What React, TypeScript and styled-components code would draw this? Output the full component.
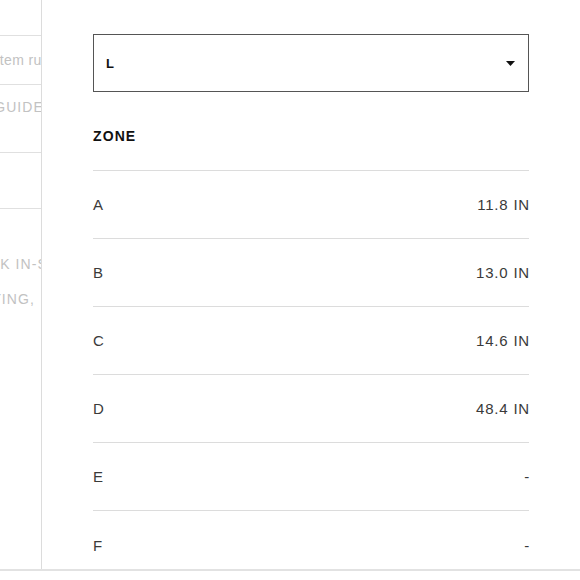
import React from 'react';
import styled, { createGlobalStyle } from 'styled-components';

const GlobalStyle = createGlobalStyle`
  html, body {
    margin: 0;
    padding: 0;
    background: #fff;
  }
  body {
    font-family: "Liberation Sans", Arial, sans-serif;
  }
`;

const Screen = styled.div`
  width: 580px;
  height: 580px;
  display: flex;
  flex-direction: column;
  overflow: hidden;
  background: #fff;
`;

const Main = styled.div`
  height: 571px;
  flex: 0 0 571px;
  min-height: 0;
  overflow: hidden;
  display: flex;
  border-bottom: 2px solid #e2e2e2;
  box-sizing: border-box;
`;

const BackPage = styled.div`
  flex: 0 0 41px;
  overflow: hidden;
  border-right: 1px solid #dcdcdc;
  display: flex;
  flex-direction: column;
`;

const BackRow = styled.div<{ $h: number; $top?: number }>`
  height: ${(p) => p.$h}px;
  flex: 0 0 ${(p) => p.$h}px;
  border-bottom: 1px solid #e0e0e0;
  display: flex;
  justify-content: flex-end;
  align-items: ${(p) => (p.$top ? 'flex-start' : 'center')};
  padding-top: ${(p) => p.$top || 0}px;
  box-sizing: border-box;
`;

const BackText = styled.span<{ $caps?: boolean; $clip?: number }>`
  white-space: nowrap;
  font-size: 14px;
  color: #c2c2c2;
  letter-spacing: ${(p) => (p.$caps ? '1.1px' : '0.4px')};
  margin-right: ${(p) => -(p.$clip ?? 0)}px;
`;

const BackCopy = styled.div`
  padding-top: 38px;
  display: flex;
  flex-direction: column;
  align-items: flex-end;
  line-height: 35px;
`;

const Drawer = styled.div`
  flex: 1;
  min-height: 0;
  padding: 34px 51px 0 51px;
  display: flex;
  flex-direction: column;
  box-sizing: border-box;
`;

const Select = styled.div`
  height: 58px;
  flex: 0 0 58px;
  border: 1px solid #555;
  box-sizing: border-box;
  display: flex;
  align-items: center;
  justify-content: space-between;
  padding: 0 13px 0 12px;
  font-size: 13px;
  font-weight: 700;
  color: #111;
`;

const Caret = styled.svg`
  width: 9px;
  height: 5px;
  display: block;
`;

const ZoneHead = styled.div`
  flex: 0 0 79px;
  height: 79px;
  box-sizing: border-box;
  padding-top: 36px;
  line-height: 16px;
  border-bottom: 1px solid #dcdcdc;
  font-size: 14px;
  font-weight: 700;
  letter-spacing: 1.1px;
  color: #111;
`;

const Row = styled.div`
  height: 68px;
  flex: 0 0 68px;
  display: flex;
  align-items: center;
  justify-content: space-between;
  border-bottom: 1px solid #dcdcdc;
  box-sizing: border-box;
  font-size: 15px;
  color: #3a3a3a;
  letter-spacing: 0.8px;

  &:last-child {
    border-bottom: none;
  }
`;

const Value = styled.span`
  margin-right: -1px;
`;

const zones = [
  { zone: 'A', value: '11.8 IN' },
  { zone: 'B', value: '13.0 IN' },
  { zone: 'C', value: '14.6 IN' },
  { zone: 'D', value: '48.4 IN' },
  { zone: 'E', value: '-' },
  { zone: 'F', value: '-' },
];

const App: React.FC = () => {
  return (
    <>
      <GlobalStyle />
      <Screen>
        <Main>
          <BackPage>
            <BackRow $h={36} />
            <BackRow $h={49}>
              <BackText $clip={9}>Item run</BackText>
            </BackRow>
            <BackRow $h={68} $top={14}>
              <BackText $caps $clip={3}>SIZE GUIDE</BackText>
            </BackRow>
            <BackRow $h={56} />
            <BackCopy>
              <BackText $caps $clip={7}>CHECK IN-S</BackText>
              <BackText $caps $clip={-6}>FITTING,</BackText>
            </BackCopy>
          </BackPage>

          <Drawer>
            <Select>
              <span>L</span>
              <Caret viewBox="0 0 9 5">
                <path d="M0 0 L9 0 L4.5 5 Z" fill="#111" />
              </Caret>
            </Select>

            <ZoneHead>ZONE</ZoneHead>

            {zones.map((z) => (
              <Row key={z.zone}>
                <span>{z.zone}</span>
                <Value>{z.value}</Value>
              </Row>
            ))}
          </Drawer>
        </Main>
      </Screen>
    </>
  );
};

export default App;
